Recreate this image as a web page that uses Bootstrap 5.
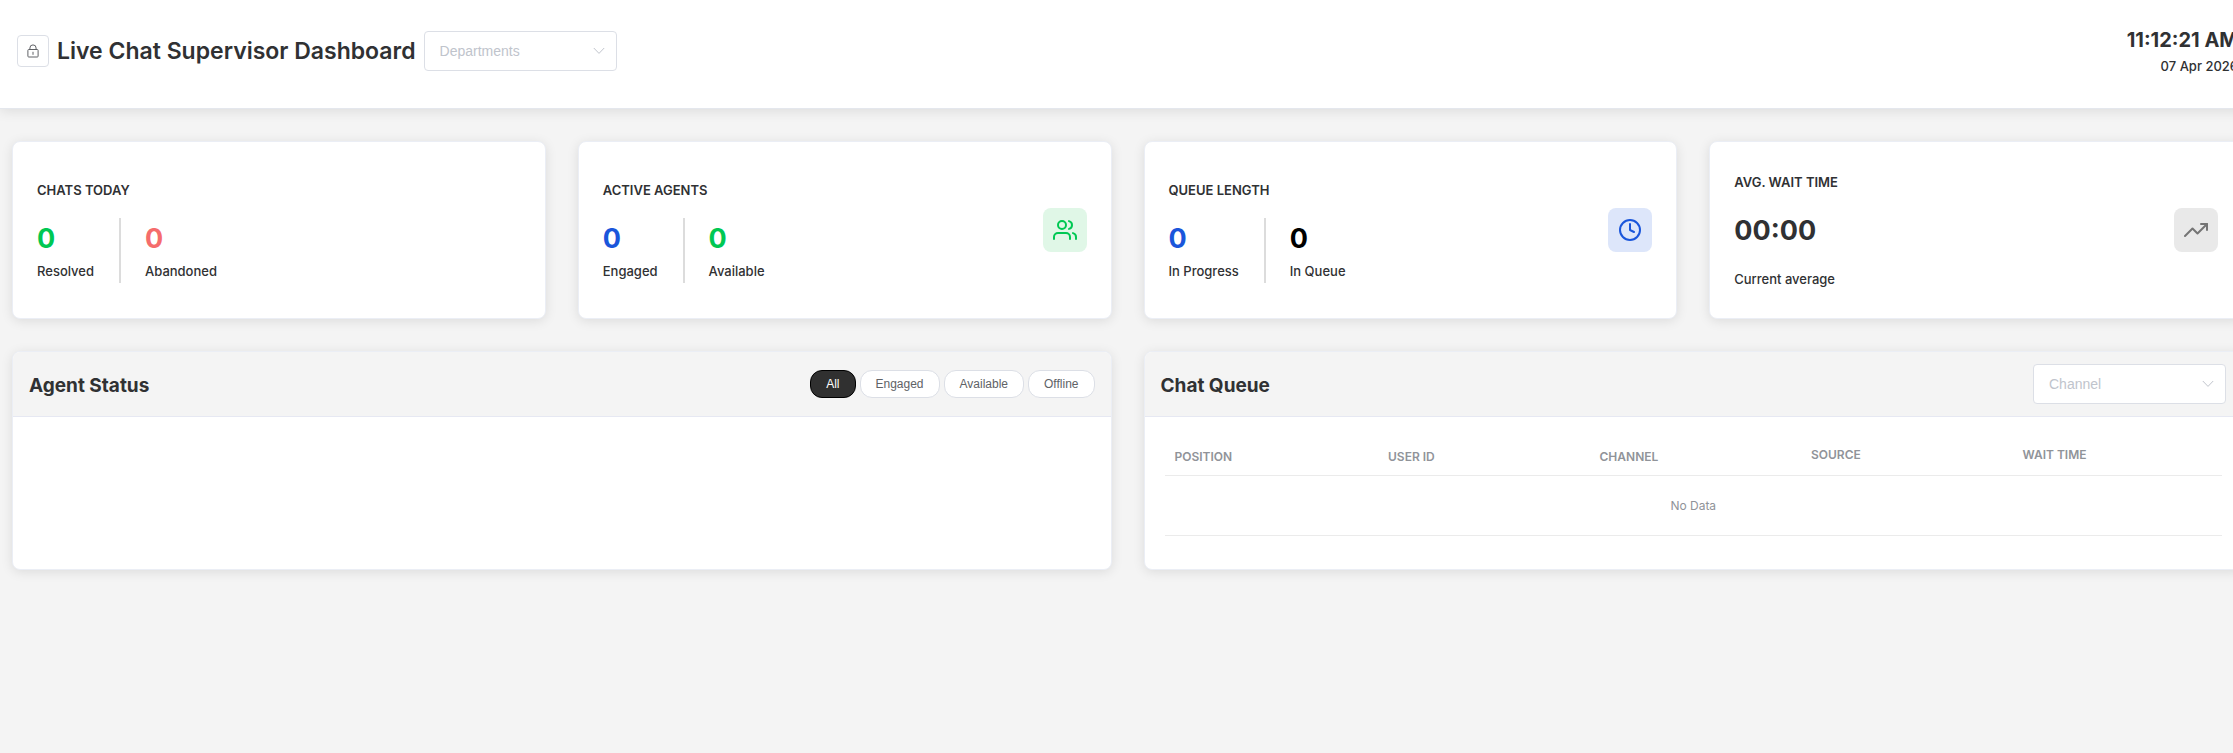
<!DOCTYPE html>
<html lang="en">
<head>
<meta charset="utf-8">
<meta name="viewport" content="width=device-width, initial-scale=1">
<title>Live Chat Supervisor Dashboard</title>
<link href="https://cdn.jsdelivr.net/npm/bootstrap@5.3.0/dist/css/bootstrap.min.css" rel="stylesheet">
<style>
  body { background: #f4f4f4; color: #303133; font-family: Inter, "Liberation Sans", sans-serif; font-size: 13px; font-weight: 500; overflow-x: hidden; }
  /* the dashboard runs a little past the right edge of the window */
  .dash-wide { width: calc(100% + 22px); }
  .dash-header { background: #fff; border-bottom: 1px solid #e4e7ed; box-shadow: 0 2px 12px rgba(0,0,0,.1); padding: 26px 17px 0; height: 109px; }
  .dash-title { font-size: 23px; font-weight: 600; line-height: 42px; }
  .lock-btn { width: 32px; height: 32px; padding: 0; border: 1px solid #dcdfe6; border-radius: 4px; background: #fff; color: #606266; }
  .dash-select { width: 193px; height: 40px; border: 1px solid #dcdfe6; border-radius: 4px; background-color: #fff; color: #c0c4cc; font: 400 14px "Liberation Sans", sans-serif; padding: 0 30px 0 15px;
    background-image: url("data:image/svg+xml,%3csvg xmlns='http://www.w3.org/2000/svg' viewBox='0 0 12 8'%3e%3cpath fill='none' stroke='%23c0c4cc' d='M.8 1 6 6.400 11.200 1'/%3e%3c/svg%3e"); background-size: 12px 8px; background-position: right 11px center; }
  .clock-time { font-size: 20px; font-weight: 700; line-height: 28px; }
  .clock-date { font-size: 13px; line-height: 24px; }
  .dash-main { padding: 32px 12px; }
  .dash-grid { --bs-gutter-x: 32px; --bs-gutter-y: 0; row-gap: 32px; }
  .panel { border: 1px solid #ebeef5; border-radius: 8px; background: #fff; box-shadow: 0 2px 12px rgba(0,0,0,.1); color: inherit; }
  .stat-card { min-height: 178px; padding: 0 24px; }
  .stat-title { font-size: 13px; font-weight: 600; line-height: 26px; margin-bottom: 15px; }
  .stat-value { font-size: 27px; font-weight: 700; line-height: 42px; }
  .stat-label { line-height: 23px; }
  .stat-first { padding-right: 25px; }
  .stat-second { padding-left: 24px; border-left: 2px solid #dcdcdc; }
  .c-green { color: #00c853; } .c-red { color: #f56c6c; } .c-blue { color: #1a56db; } .c-black { color: #000; }
  .tile { width: 44px; height: 44px; border-radius: 8px; }
  .tile-green { background: #e0f7e7; color: #00c853; }
  .tile-blue { background: #dde6fa; color: #1a56db; }
  .tile-grey { background: #e9e9e9; color: #757575; }
  .panel-head { height: 65px; padding: 0 16px; background: #f4f4f4; border-bottom: 1px solid #e6e8f2; border-radius: 7px 7px 0 0; }
  .panel-title { font-size: 19px; font-weight: 700; line-height: 28px; padding-top: 3px; }
  .pill { height: 28px; border: 1px solid #dcdfe6; border-radius: 12px; background: #fff; color: #606266; font: 400 12px "Liberation Sans", sans-serif; padding: 0 15px; }
  .pill.active { background: #303030; border-color: #000; color: #fff; }
  .panel-body { min-height: 152px; padding: 18px 20px 0; }
  .queue { table-layout: fixed; width: 100%; }
  .queue th { height: 40px; padding: 0 12px; font-size: 12px; font-weight: 600; color: #909399; border-bottom: 1px solid #ebebeb; vertical-align: middle; }
  .queue th.sortable { padding-top: 4px; }
  .queue th:first-child { padding-left: 10px; }
  .queue td { height: 60px; padding: 2px 0 0; font-size: 12px; font-weight: 400; color: #909399; text-align: center; border-bottom: 1px solid #ebebeb; }
</style>
</head>
<body>
<header class="dash-header dash-wide d-flex justify-content-between align-items-start">
  <div class="d-flex align-items-center gap-2 pt-1">
    <button type="button" class="lock-btn d-flex align-items-center justify-content-center" aria-label="Lock">
      <svg width="12" height="14" viewBox="0 0 12 14" fill="none" stroke="currentColor"><rect x=".9" y="5.500" width="10.200" height="7.500" rx=".8"/><path d="M2.900 5.500V4a3.100 3.100 0 0 1 6.200 0v1.500M6 7.800v3"/></svg>
    </button>
    <h1 class="dash-title m-0">Live Chat Supervisor Dashboard</h1>
    <select class="form-select dash-select" aria-label="Departments"><option>Departments</option></select>
  </div>
  <div class="text-end">
    <div class="clock-time">11:12:21 AM</div>
    <div class="clock-date">07 Apr 2026</div>
  </div>
</header>

<main class="dash-main dash-wide">
  <div class="row dash-grid">
    <div class="col-3">
      <section class="panel stat-card d-flex align-items-center justify-content-between">
        <div>
          <h2 class="stat-title">CHATS TODAY</h2>
          <div class="d-flex">
            <div class="stat-first"><div class="stat-value c-green">0</div><div class="stat-label">Resolved</div></div>
            <div class="stat-second"><div class="stat-value c-red">0</div><div class="stat-label">Abandoned</div></div>
          </div>
        </div>
      </section>
    </div>
    <div class="col-3">
      <section class="panel stat-card d-flex align-items-center justify-content-between">
        <div>
          <h2 class="stat-title">ACTIVE AGENTS</h2>
          <div class="d-flex">
            <div class="stat-first"><div class="stat-value c-blue">0</div><div class="stat-label">Engaged</div></div>
            <div class="stat-second"><div class="stat-value c-green">0</div><div class="stat-label">Available</div></div>
          </div>
        </div>
        <div class="tile tile-green d-flex align-items-center justify-content-center">
          <svg width="24" height="24" viewBox="0 0 24 24" fill="none" stroke="currentColor" stroke-width="2" stroke-linecap="round" stroke-linejoin="round"><path d="M17 21v-2a4 4 0 0 0-4-4H5a4 4 0 0 0-4 4v2"/><circle cx="9" cy="7" r="4"/><path d="M23 21v-2a4 4 0 0 0-3-3.870M16 3.130a4 4 0 0 1 0 7.750"/></svg>
        </div>
      </section>
    </div>
    <div class="col-3">
      <section class="panel stat-card d-flex align-items-center justify-content-between">
        <div>
          <h2 class="stat-title">QUEUE LENGTH</h2>
          <div class="d-flex">
            <div class="stat-first"><div class="stat-value c-blue">0</div><div class="stat-label">In Progress</div></div>
            <div class="stat-second"><div class="stat-value c-black">0</div><div class="stat-label">In Queue</div></div>
          </div>
        </div>
        <div class="tile tile-blue d-flex align-items-center justify-content-center">
          <svg width="24" height="24" viewBox="0 0 24 24" fill="none" stroke="currentColor" stroke-width="2" stroke-linecap="round" stroke-linejoin="round"><circle cx="12" cy="12" r="10"/><path d="M12 6v6l4 2"/></svg>
        </div>
      </section>
    </div>
    <div class="col-3">
      <section class="panel stat-card d-flex align-items-center justify-content-between">
        <div>
          <h2 class="stat-title">AVG. WAIT TIME</h2>
          <div class="stat-value mb-3">00:00</div>
          <div class="stat-label">Current average</div>
        </div>
        <div class="tile tile-grey d-flex align-items-center justify-content-center">
          <svg width="24" height="24" viewBox="0 0 24 24" fill="none" stroke="currentColor" stroke-width="2" stroke-linecap="round" stroke-linejoin="round"><path d="m23 6-9.500 9.500-5-5L1 18"/><path d="M17 6h6v6"/></svg>
        </div>
      </section>
    </div>

    <div class="col-6">
      <section class="panel">
        <div class="panel-head d-flex align-items-center justify-content-between">
          <h2 class="panel-title m-0">Agent Status</h2>
          <div class="d-flex gap-1">
            <button type="button" class="pill active">All</button>
            <button type="button" class="pill">Engaged</button>
            <button type="button" class="pill">Available</button>
            <button type="button" class="pill">Offline</button>
          </div>
        </div>
        <div class="panel-body"></div>
      </section>
    </div>
    <div class="col-6">
      <section class="panel">
        <div class="panel-head d-flex align-items-center justify-content-between">
          <h2 class="panel-title m-0">Chat Queue</h2>
          <select class="form-select dash-select" aria-label="Channel"><option>Channel</option></select>
        </div>
        <div class="panel-body">
          <table class="queue">
            <thead><tr><th class="sortable">POSITION</th><th class="sortable">USER ID</th><th class="sortable">CHANNEL</th><th>SOURCE</th><th>WAIT TIME</th></tr></thead>
            <tbody><tr><td colspan="5">No Data</td></tr></tbody>
          </table>
        </div>
      </section>
    </div>
  </div>
</main>
<script src="https://cdn.jsdelivr.net/npm/bootstrap@5.3.0/dist/js/bootstrap.bundle.min.js"></script>
</body>
</html>
